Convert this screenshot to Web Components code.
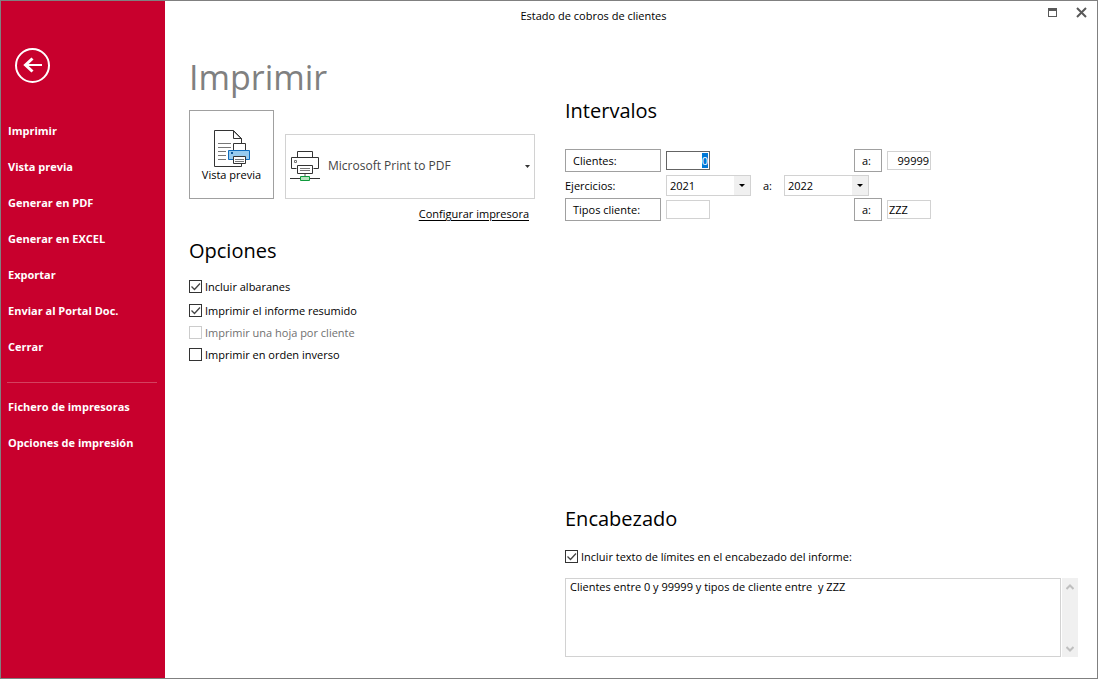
<!DOCTYPE html>
<html lang="es">
<head>
<meta charset="utf-8">
<meta name="viewport" content="width=device-width, initial-scale=1">
<title>Estado de cobros de clientes</title>
<style>
  html, body { margin: 0; min-height: 100%; }
  body {
    --brand: #c8002d;
    --line: #a0a0a0;
    --line-soft: #d2d2d2;
    --ink: #000;
    font: 11px/16px "Open Sans", "Noto Sans", sans-serif;
    color: var(--ink);
    background: #fff;
  }
</style>
</head>
<body>
<app-window></app-window>

<template id="t-window">
  <style>
    :host {
      display: grid;
      grid-template-columns: 164px minmax(0, 1fr);
      min-height: 100vh;
      box-sizing: border-box;
      border: 1px solid #808080;
    }
    .main { display: flex; flex-direction: column; }
    .columns {
      flex: 1;
      display: grid;
      grid-template-columns: 346px minmax(0, 1fr);
      column-gap: 30px;
      padding: 0 19px 21px 24px;
    }
    .left { display: flex; flex-direction: column; }
    .right { display: flex; flex-direction: column; justify-content: space-between; padding-top: 64px; }
    h1 { margin: 21px 0 9px; font-size: 34px; line-height: 48px; font-weight: 400; color: #808080; }
    .printer { display: flex; align-items: flex-end; gap: 11px; }
    printer-picker { flex: 1; }
    .configure { text-align: right; padding: 5px 6px 0 0; line-height: 20px; }
    .configure a { color: inherit; text-underline-offset: 2px; }
    .options { margin-top: 12px; }
    .checks { display: grid; grid-template-rows: 24px 24px 20px 24px; margin-top: 10px; align-items: center; }
  </style>
  <side-nav></side-nav>
  <div class="main">
    <title-bar>Estado de cobros de clientes</title-bar>
    <main class="columns">
      <div class="left">
        <h1>Imprimir</h1>
        <div class="printer">
          <preview-button>Vista previa</preview-button>
          <printer-picker></printer-picker>
        </div>
        <div class="configure"><a href="#configurar">Configurar impresora</a></div>
        <page-section class="options" heading="Opciones">
          <div class="checks">
            <check-option checked>Incluir albaranes</check-option>
            <check-option checked>Imprimir el informe resumido</check-option>
            <check-option disabled>Imprimir una hoja por cliente</check-option>
            <check-option>Imprimir en orden inverso</check-option>
          </div>
        </page-section>
      </div>
      <div class="right">
        <page-section heading="Intervalos"><range-fields></range-fields></page-section>
        <page-section heading="Encabezado"><header-text></header-text></page-section>
      </div>
    </main>
  </div>
</template>

<template id="t-nav">
  <style>
    :host { display: block; background: var(--brand); color: #fff; }
    nav { display: flex; flex-direction: column; padding: 47px 8px 0 6px; }
    .back { width: 35px; height: 35px; margin: 0 0 30px 8px; padding: 0; border: 0; background: none; cursor: pointer; }
    .back svg { display: block; }
    hr { width: 100%; height: 1px; margin: 17px 0 6px; border: 0; background: #d4415f; }
  </style>
  <nav aria-label="Acciones">
    <button class="back" type="button" aria-label="Volver">
      <svg width="35" height="35" viewBox="0 0 35 35" fill="none" stroke="#fff">
        <circle cx="17.5" cy="17.5" r="16.5" stroke-width="2"/>
        <path d="M10 17h17" stroke-width="2"/>
        <path d="M17.5 10.5 10.5 17l7 6.5" stroke-width="3"/>
      </svg>
    </button>
    <nav-link>Imprimir</nav-link>
    <nav-link>Vista previa</nav-link>
    <nav-link>Generar en PDF</nav-link>
    <nav-link>Generar en EXCEL</nav-link>
    <nav-link>Exportar</nav-link>
    <nav-link>Enviar al Portal Doc.</nav-link>
    <nav-link>Cerrar</nav-link>
    <hr>
    <nav-link>Fichero de impresoras</nav-link>
    <nav-link>Opciones de impresión</nav-link>
  </nav>
</template>

<template id="t-nav-link">
  <style>
    :host { display: block; }
    a { display: block; padding-left: 1px; color: #fff; text-decoration: none; font-size: 11px; font-weight: 700; line-height: 36px; white-space: nowrap; }
  </style>
  <a href="#"><slot></slot></a>
</template>

<template id="t-title">
  <style>
    :host { display: flex; height: 31px; }
    .name { flex: 1; text-align: center; line-height: 30px; }
    .controls { display: flex; width: 75px; padding: 4px 8px 0 0; box-sizing: border-box; justify-content: flex-end; gap: 14px; align-items: flex-start; }
    button { width: 15px; height: 15px; padding: 0; border: 0; background: none; cursor: pointer; }
    svg { display: block; }
  </style>
  <div class="name"><slot></slot></div>
  <div class="controls">
    <button type="button" aria-label="Maximizar">
      <svg width="15" height="15" viewBox="0 0 15 15" shape-rendering="crispEdges"><path d="M3 3h9v9H3z" fill="#595959"/><path d="M4 6h7v5H4z" fill="#fff"/></svg>
    </button>
    <button type="button" aria-label="Cerrar ventana">
      <svg width="15" height="15" viewBox="0 0 15 15" fill="none" stroke="#595959" stroke-width="2"><path d="m3 3 9 9M12 3l-9 9"/></svg>
    </button>
  </div>
</template>

<template id="t-section">
  <style>
    :host { display: block; }
    h2 { margin: 0; font-size: 20px; line-height: 30px; font-weight: 400; }
  </style>
  <section><h2></h2><slot></slot></section>
</template>

<template id="t-preview">
  <style>
    :host { display: block; }
    button {
      display: flex; flex-direction: column; align-items: center; width: 85px; height: 89px;
      padding: 18px 0 0; box-sizing: border-box; border: 1px solid var(--line); background: #fff;
      font: inherit; color: inherit; cursor: pointer;
    }
  </style>
  <button type="button">
    <svg width="39" height="38" viewBox="-1 0 39 38" fill="none">
      <path d="M1.5 1.5h19l8 8v28h-27z" fill="#fff" stroke="#333"/>
      <path d="M20.5 1.5v8h8M20.5 2l8 8" stroke="#333"/>
      <path d="M5 14.5h13M5 18.5h13M5 22.5h8M5 26.5h8M5 30.5h8" stroke="#777"/>
      <path d="M20.5 14.5h12v7h-12z" fill="#fff" stroke="#333"/>
      <path d="M15.5 21.5h21v9h-21z" fill="#98cbee" stroke="#0f6cbd"/>
      <path d="M18 23h2v2h-2z" fill="#0f5a9e"/>
      <path d="M20.5 27.5h12v7h-12z" fill="#fff" stroke="#333"/>
      <path d="M22 30.5h9M22 32.5h9" stroke="#777"/>
    </svg>
    <slot></slot>
  </button>
</template>

<template id="t-picker">
  <style>
    :host { display: grid; height: 65px; }
    select, svg { grid-area: 1 / 1; }
    select {
      appearance: none; width: 100%; height: 65px; margin: 0; padding: 0 20px 1px 42px; border: 1px solid var(--line-soft);
      border-radius: 0; background: #fff; font: inherit; font-size: 12px; color: #444;
    }
    svg { pointer-events: none; z-index: 1; }
    .icon { margin: 16px 0 0 5px; }
    .arrow { justify-self: end; align-self: center; margin-right: 5px; }
  </style>
  <select aria-label="Impresora"><option>Microsoft Print to PDF</option></select>
  <svg class="icon" width="30" height="32" viewBox="0 0 30 32" fill="none">
    <path d="M7.5 7V1.5h15V7" stroke="#333"/>
    <path d="M6.5 18.5h-5v-11h27v11h-5" stroke="#333"/>
    <path d="M4.5 10.5h2v2h-2z" stroke="#777"/>
    <path d="M7.5 15.5h15v8h-15z" stroke="#333"/>
    <path d="M10 18.5h10M10 20.5h10" stroke="#777"/>
    <path d="M15 24v3" stroke="#aaa" stroke-width="2"/>
    <path d="M0 28.5h30" stroke="#333"/>
    <path d="M10.5 26.5h9v4h-9z" fill="#b5e3bd" stroke="#0f9a3c"/>
  </svg>
  <svg class="arrow" width="5" height="3" viewBox="0 0 5 3"><path d="M0 0h5L2.5 3z" fill="#333"/></svg>
</template>

<template id="t-check">
  <style>
    :host { display: block; }
    label { display: inline-flex; align-items: center; gap: 3px; line-height: 16px; white-space: nowrap; }
    input { appearance: none; flex: none; width: 13px; height: 13px; margin: 0; box-sizing: border-box; border: 1px solid #333; background: #fff; }
    input:checked { background: url("data:image/svg+xml,%3Csvg xmlns='http://www.w3.org/2000/svg' viewBox='0 0 11 11'%3E%3Cpath d='M1.5 5.5l3 3 5.5-6' fill='none' stroke='%23444' stroke-width='1.3'/%3E%3C/svg%3E") center / 11px 11px no-repeat; }
    :host([disabled]) input { border-color: #ccc; }
    :host([disabled]) label { color: #707070; }
  </style>
  <label><input type="checkbox"><span><slot></slot></span></label>
</template>

<template id="t-ranges">
  <style>
    :host { display: grid; grid-template-rows: 25px 25px 23px; max-width: 366px; margin-top: 22px; }
    .row { display: flex; align-items: center; gap: 5px; }
    .years { gap: 0; }
    button, input { box-sizing: border-box; margin: 0; font: inherit; color: inherit; background: #fff; border-radius: 0; }
    button { width: 96px; height: 23px; padding: 0 7px; border: 1px solid var(--line); text-align: left; }
    .to { width: 28px; margin-left: auto; }
    input { width: 44px; height: 19px; padding: 0 1px 1px; border: 1px solid var(--line-soft); outline: 0; }
    input:focus { border-color: #646464; }
    input::selection { background: #0078d7; color: #fff; }
    .num { text-align: right; }
    .years > span { width: 101px; }
    .years > label { width: 33px; padding-left: 12px; box-sizing: border-box; }
  </style>
  <div class="row">
    <button type="button" id="cli">Clientes:</button>
    <input class="num first" value="0" aria-labelledby="cli">
    <button type="button" class="to" id="cli-to">a:</button>
    <input class="num" value="99999" aria-labelledby="cli cli-to">
  </div>
  <div class="row years">
    <span>Ejercicios:</span>
    <year-select name="Ejercicio inicial" value="2021"></year-select>
    <label>a:</label>
    <year-select name="Ejercicio final" value="2022"></year-select>
  </div>
  <div class="row">
    <button type="button" id="typ">Tipos cliente:</button>
    <input aria-labelledby="typ">
    <button type="button" class="to" id="typ-to">a:</button>
    <input value="ZZZ" aria-labelledby="typ typ-to">
  </div>
</template>

<template id="t-year">
  <style>
    :host { display: grid; width: 85px; height: 21px; }
    select, .arrow { grid-area: 1 / 1; }
    select { appearance: none; width: 100%; height: 21px; margin: 0; padding: 0 17px 0 3px; border: 1px solid var(--line-soft); border-radius: 0; background: #fff; font: inherit; color: inherit; }
    .arrow { justify-self: end; display: grid; place-items: center; width: 16px; height: 19px; margin: 1px; background: #f0f0f0; pointer-events: none; z-index: 1; }
  </style>
  <select><option>2021</option><option>2022</option></select>
  <span class="arrow"><svg width="6" height="3" viewBox="0 0 6 3"><path d="M0 0h6L3 3z" fill="#000"/></svg></span>
</template>

<template id="t-header">
  <style>
    :host { display: block; margin-top: 15px; }
    .box { display: flex; gap: 1px; margin-top: 11px; height: 79px; }
    textarea {
      flex: 1; min-width: 0; box-sizing: border-box; margin: 0; padding: 0 4px; border: 1px solid var(--line-soft); border-radius: 0;
      resize: none; overflow: hidden; font: inherit; color: inherit; background: #fff;
    }
    .bar { display: flex; flex-direction: column; justify-content: space-between; width: 16px; background: #f0f0f0; }
    .bar button { width: 16px; height: 17px; padding: 0; border: 0; background: none; display: grid; place-items: center; }
  </style>
  <check-option checked>Incluir texto de límites en el encabezado del informe:</check-option>
  <div class="box">
    <textarea aria-label="Texto de límites">Clientes entre 0 y 99999 y tipos de cliente entre  y ZZZ</textarea>
    <div class="bar">
      <button type="button" aria-label="Subir"><svg width="8" height="6" viewBox="0 0 8 6" fill="none" stroke="#bfbfbf" stroke-width="2"><path d="M.5 5 4 1.5 7.5 5"/></svg></button>
      <button type="button" aria-label="Bajar"><svg width="8" height="6" viewBox="0 0 8 6" fill="none" stroke="#bfbfbf" stroke-width="2"><path d="M.5 1 4 4.5 7.5 1"/></svg></button>
    </div>
  </div>
</template>

<script>
  class Base extends HTMLElement {
    constructor() {
      super();
      const tpl = document.getElementById(this.constructor.template);
      this.attachShadow({ mode: "open" }).append(tpl.content.cloneNode(true));
    }
    $(sel) { return this.shadowRoot.querySelector(sel); }
  }
  const define = (name, template, ready) =>
    customElements.define(name, class extends Base {
      static template = template;
      connectedCallback() { if (ready) ready(this); }
    });

  define("nav-link", "t-nav-link");
  define("side-nav", "t-nav");
  define("title-bar", "t-title");
  define("page-section", "t-section", el => { el.$("h2").textContent = el.getAttribute("heading"); });
  define("preview-button", "t-preview");
  define("printer-picker", "t-picker");
  define("check-option", "t-check", el => {
    el.$("input").checked = el.hasAttribute("checked");
    el.$("input").disabled = el.hasAttribute("disabled");
  });
  define("year-select", "t-year", el => {
    el.$("select").value = el.getAttribute("value");
    el.$("select").setAttribute("aria-label", el.getAttribute("name"));
  });
  define("range-fields", "t-ranges", el => {
    const first = el.$(".first");
    first.focus();
    first.select();
  });
  define("header-text", "t-header");
  define("app-window", "t-window");
</script>
</body>
</html>
